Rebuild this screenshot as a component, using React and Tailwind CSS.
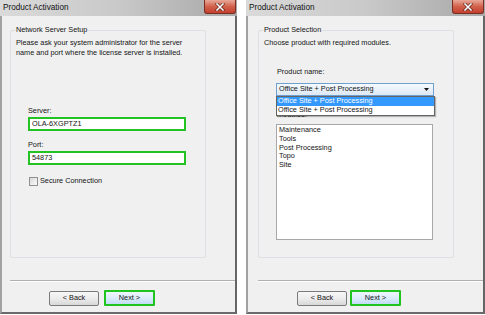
import React from "react";

function CloseButton() {
  return (
    <div className="flex h-[14px] w-[32px] items-center justify-center self-start rounded-b-[3px] border border-t-0 border-[#7a2d24] bg-gradient-to-b from-[#e8a898] via-[#d2604c] to-[#c33f2c]">
      <svg width="10" height="8" viewBox="0 0 10 8">
        <path d="M2 1 L8 7 M8 1 L2 7" stroke="#5a2018" strokeWidth="3" strokeLinecap="square" />
        <path d="M2 1 L8 7 M8 1 L2 7" stroke="#ffffff" strokeWidth="1.6" strokeLinecap="square" />
      </svg>
    </div>
  );
}

function TitleBar() {
  return (
    <div className="flex h-[16px] shrink-0 items-start justify-between bg-gradient-to-r from-[#dadada] via-[#c9c9c9] to-[#a8a8a8] pl-[3px] pr-[1px]">
      <span className="mt-[3px] text-[8.2px] leading-[10px] text-[#111]">Product Activation</span>
      <CloseButton />
    </div>
  );
}

function GroupBox({ label, children, className }) {
  return (
    <div className={"relative rounded-[2px] border border-[#dcdfe3] " + className}>
      <span className="absolute left-[4px] top-[-6px] bg-[#f0f0f0] px-[1px] leading-[10px]">{label}</span>
      {children}
    </div>
  );
}

function Buttons({ pad, gap }) {
  return (
    <div className={"mt-[8px] flex items-center " + pad + " " + gap}>
      <div className="flex h-[15px] w-[50px] items-center justify-center rounded-[2px] border border-[#7a7a7a] bg-gradient-to-b from-[#f7f7f7] via-[#ececec] to-[#d8d8d8]">
        &lt; Back
      </div>
      <div className="flex h-[16px] w-[51px] items-center justify-center rounded-[1px] border-2 border-[#1fc41f] bg-gradient-to-b from-[#eef6fd] via-[#dcecfa] to-[#c2ddf4]">
        Next &gt;
      </div>
    </div>
  );
}

function Separator({ ml }) {
  return (
    <div className={"mt-[22px] " + ml}>
      <div className="h-px bg-[#b0b0b0]" />
      <div className="h-px bg-white" />
    </div>
  );
}

function Field({ label, value, top }) {
  return (
    <div className={top}>
      <div className="ml-[12px] leading-[10px]">{label}</div>
      <div className="ml-[12px] mt-[1px] flex h-[14px] w-[158px] items-center border-2 border-[#22c322] bg-white pl-[2px]">
        {value}
      </div>
    </div>
  );
}

export default function App() {
  return (
    <div className="flex h-[315px] w-[485px] gap-[9px] bg-white font-['Liberation_Sans',Arial,sans-serif] text-[7.3px] text-[#141414]">
      {/* Left window */}
      <div className="flex h-[314px] w-[237px] flex-col">
        <TitleBar />
        <div className="flex flex-1 flex-col border-b-2 border-l-2 border-r-2 border-b-[#6a6a6a] border-l-[#a2a2a2] border-r-[#666666] bg-[#f0f0f0]">
          <GroupBox label="Network Server Setup" className="ml-[8px] mt-[14px] h-[228px] w-[196px] px-[5px]">
            <div className="pt-[7px] leading-[9.6px]">
              Please ask your system administrator for the server
              <br />
              name and port where the license server is installed.
            </div>
            <Field label="Server:" value="OLA-6XGPTZ1" top="mt-[49px]" />
            <Field label="Port:" value="54873" top="mt-[9px]" />
            <div className="ml-[13px] mt-[11px] flex items-center gap-[2px]">
              <div className="h-[9px] w-[9px] border border-[#8e8f8f] bg-gradient-to-br from-[#d8d8d8] to-[#fbfbfb]" />
              <span className="leading-[10px]">Secure Connection</span>
            </div>
          </GroupBox>
          <Separator ml="ml-[8px]" />
          <Buttons pad="pl-[47px]" gap="gap-[5px]" />
        </div>
      </div>

      {/* Right window */}
      <div className="flex h-[314px] w-[239px] flex-col">
        <TitleBar />
        <div className="flex flex-1 flex-col border-b-2 border-l-2 border-r-2 border-b-[#6a6a6a] border-l-[#a2a2a2] border-r-[#666666] bg-[#f0f0f0]">
          <GroupBox label="Product Selection" className="ml-[10px] mt-[14px] h-[228px] w-[196px] px-[5px]">
            <div className="pt-[7px] leading-[10px]">Choose product with required modules.</div>
            <div className="ml-[13px] mt-[19px] leading-[10px]">Product name:</div>
            <div className="relative ml-[12px] mt-[6px] w-[158px]">
              <div className="flex h-[13px] items-center justify-between border border-[#6e9fcf] bg-gradient-to-b from-[#f4f9fd] to-[#dde9f5] pl-[2px] pr-[4px]">
                <span>Office Site + Post Processing</span>
                <svg width="5" height="3" viewBox="0 0 5 3">
                  <path d="M0 0 H5 L2.5 3 Z" fill="#111" />
                </svg>
              </div>
              <div className="absolute left-0 top-[13px] z-10 w-[159px] border border-[#646464] bg-white shadow-[1px_1px_1px_rgba(0,0,0,0.25)]">
                <div className="flex h-[9px] items-center bg-[#3399ff] pl-[1px] text-white">Office Site + Post Processing</div>
                <div className="flex h-[9px] items-center pl-[1px]">Office Site + Post Processing</div>
              </div>
              <div className="mt-[14px] pl-[1px] leading-[10px]">Modules:</div>
              <div className="mt-[4px] h-[116px] w-[157px] border border-[#a8a8a8] bg-white pl-[2px] pt-[1px] leading-[8.8px]">
                <div>Maintenance</div>
                <div>Tools</div>
                <div>Post Processing</div>
                <div>Topo</div>
                <div>Site</div>
              </div>
            </div>
          </GroupBox>
          <Separator ml="ml-[10px]" />
          <Buttons pad="pl-[49px]" gap="gap-[3px]" />
        </div>
      </div>
    </div>
  );
}
